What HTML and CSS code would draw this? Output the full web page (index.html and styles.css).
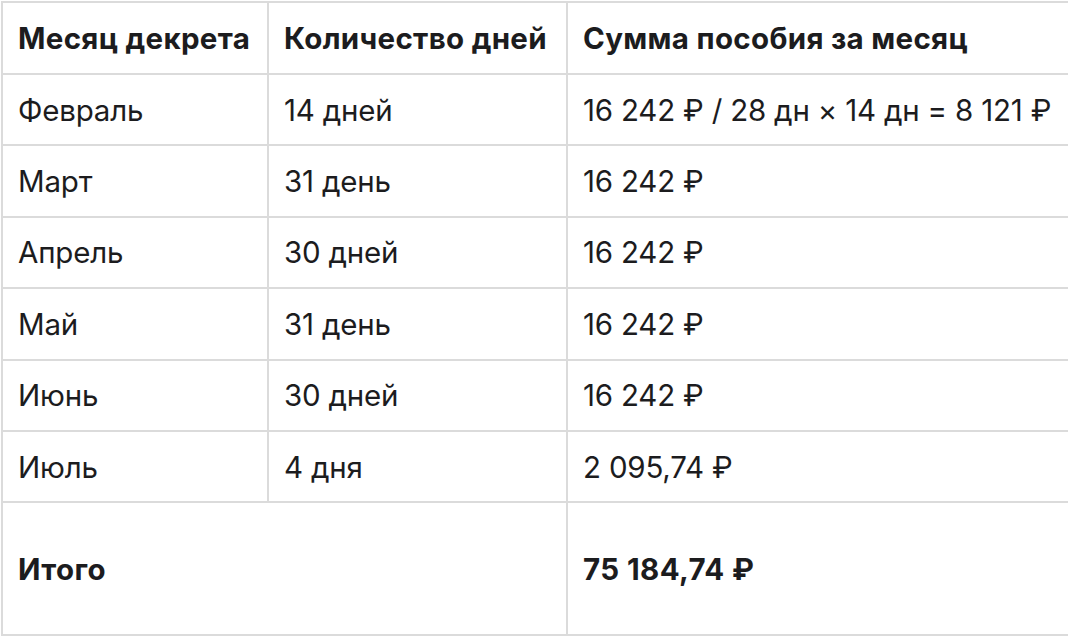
FILE: index.html
```html
<!DOCTYPE html>
<html lang="ru">
<head>
<meta charset="utf-8">
<link rel="stylesheet" href="styles.css">
</head>
<body>
<table class="benefit">
  <thead>
    <tr>
      <th class="c1">Месяц декрета</th>
      <th class="c2">Количество дней</th>
      <th class="c3">Сумма пособия за месяц</th>
    </tr>
  </thead>
  <tbody>
    <tr><td>Февраль</td><td>14 дней</td><td>16 242 ₽ / 28 дн × 14 дн = 8 121 ₽</td></tr>
    <tr><td>Март</td><td>31 день</td><td>16 242 ₽</td></tr>
    <tr><td>Апрель</td><td>30 дней</td><td>16 242 ₽</td></tr>
    <tr><td>Май</td><td>31 день</td><td>16 242 ₽</td></tr>
    <tr><td>Июнь</td><td>30 дней</td><td>16 242 ₽</td></tr>
    <tr><td>Июль</td><td>4 дня</td><td>2 095,74 ₽</td></tr>
    <tr class="total"><td colspan="2">Итого</td><td>75 184,74 ₽</td></tr>
  </tbody>
</table>
</body>
</html>
```

FILE: styles.css
```css
html, body {
  margin: 0;
  padding: 0;
  background: #ffffff;
  overflow: hidden;
}
body {
  padding: 1px 0 0 1px;
  font-family: Inter, "Noto Sans", sans-serif;
  color: #1c1c1e;
}
.benefit {
  border-collapse: collapse;
  table-layout: fixed;
  width: 1100px;
  font-size: 29.5px;
  letter-spacing: -0.2px;
}
.benefit th,
.benefit td {
  border: 2px solid #dbdbdb;
  padding: 0 0 0 15px;
  text-align: left;
  vertical-align: middle;
  white-space: nowrap;
  height: 71.4px;
  box-sizing: border-box;
}
.benefit th {
  font-weight: 700;
  letter-spacing: 0.3px;
  height: 72px;
}
.c1 { width: 266px; }
.c2 { width: 299px; }
.benefit .total td {
  height: 133px;
  font-weight: 700;
  letter-spacing: 0.4px;
}
```
